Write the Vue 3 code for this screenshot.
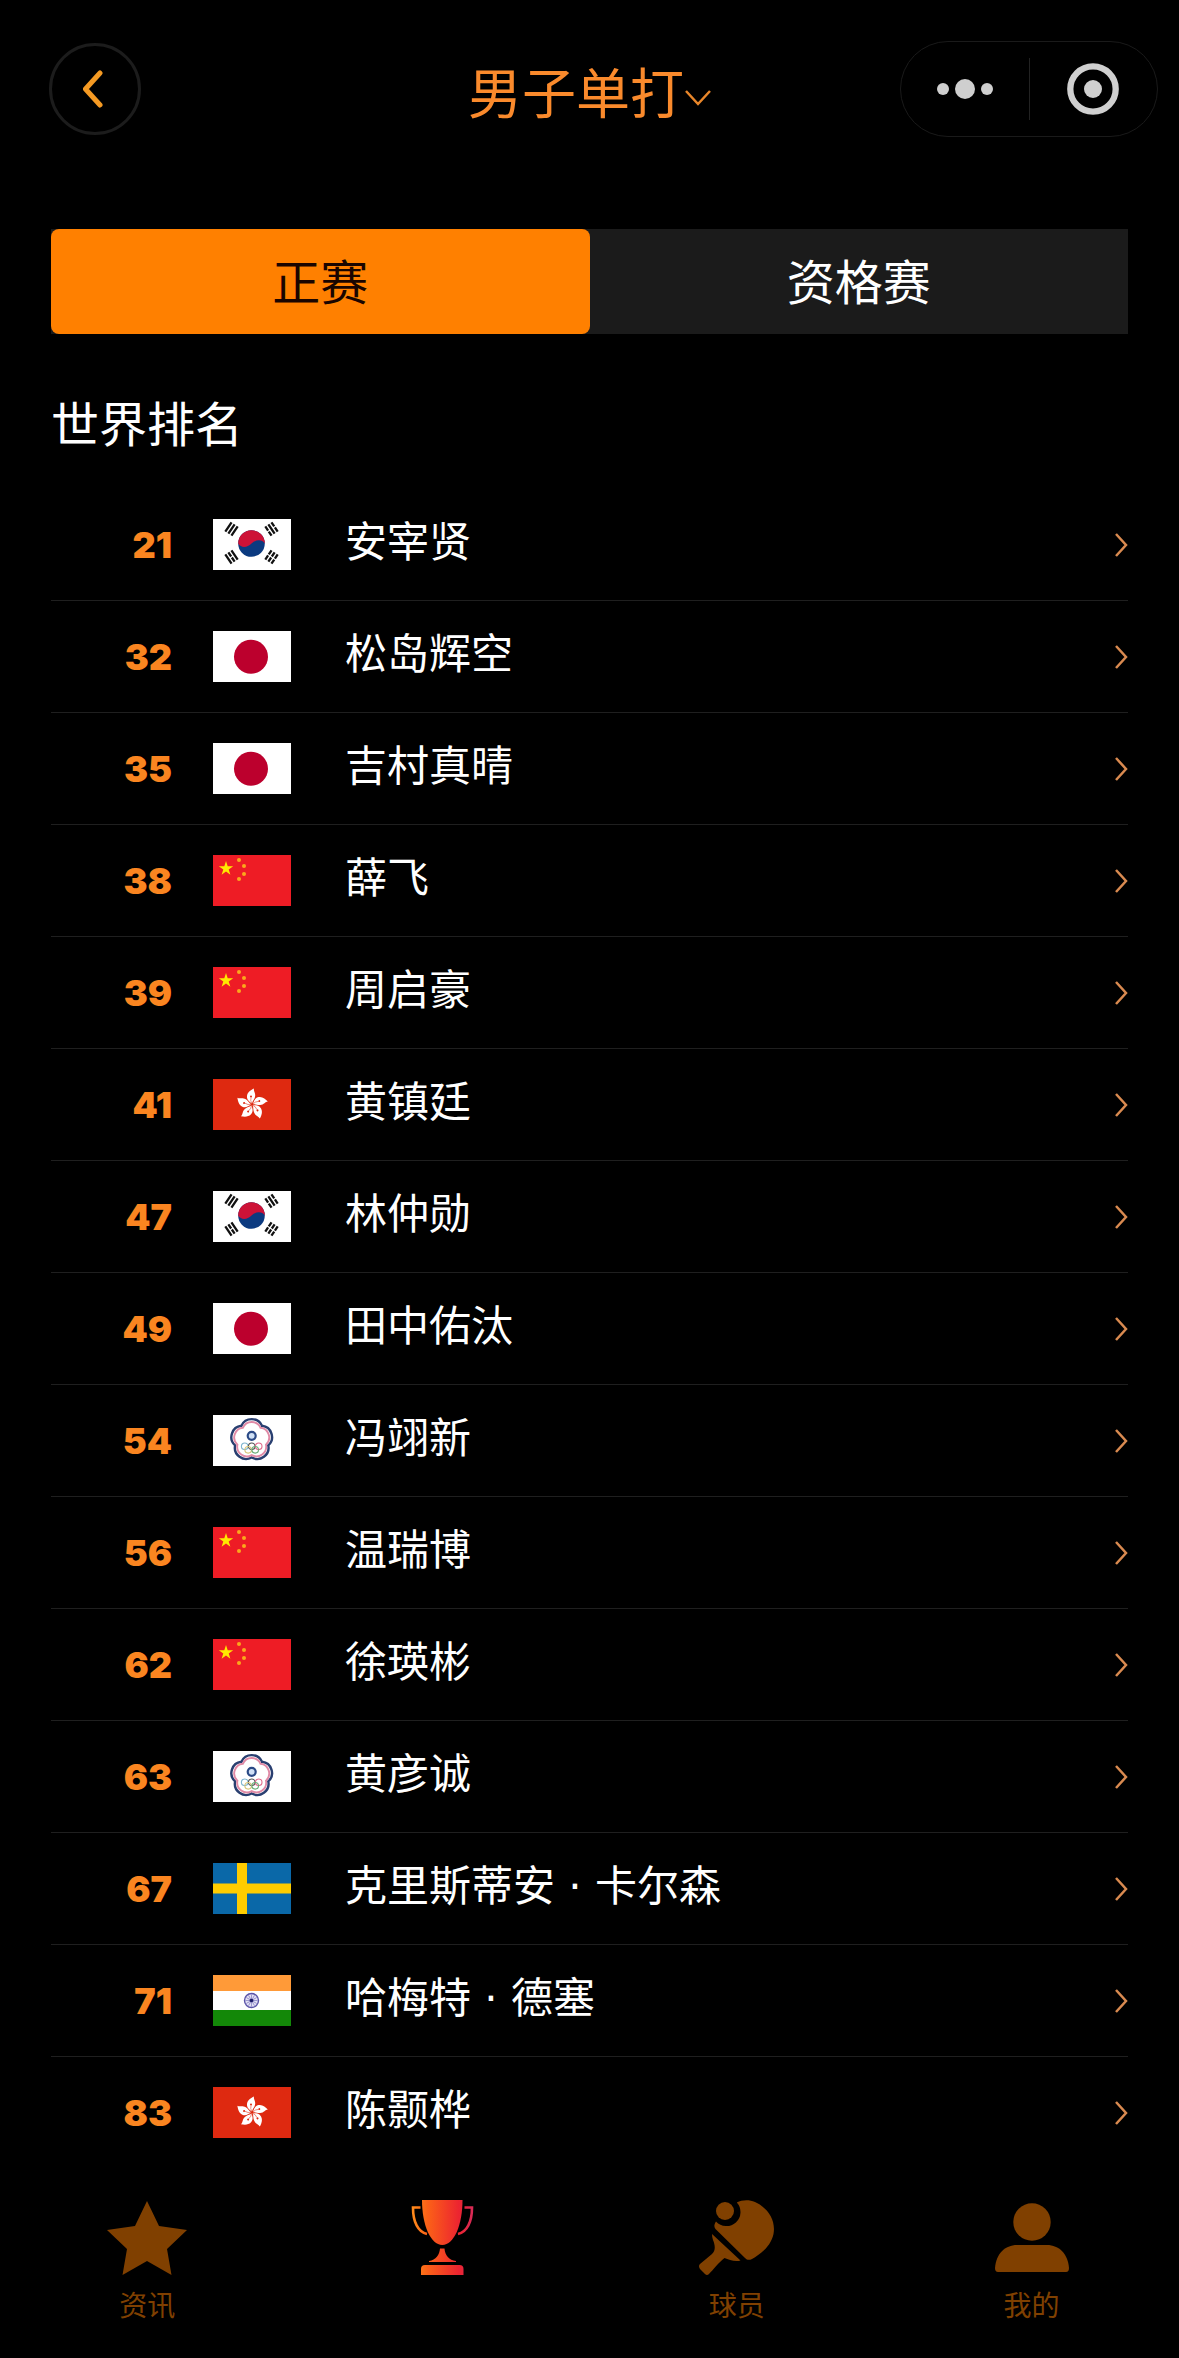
<script setup>
import { ref } from 'vue'

const events = ['男子单打']
const selectedEvent = ref(events[0])

const stages = ['正赛', '资格赛']
const activeStage = ref('正赛')

const players = [
  { rank: 21, flag: 'kr', name: '安宰贤' },
  { rank: 32, flag: 'jp', name: '松岛辉空' },
  { rank: 35, flag: 'jp', name: '吉村真晴' },
  { rank: 38, flag: 'cn', name: '薛飞' },
  { rank: 39, flag: 'cn', name: '周启豪' },
  { rank: 41, flag: 'hk', name: '黄镇廷' },
  { rank: 47, flag: 'kr', name: '林仲勋' },
  { rank: 49, flag: 'jp', name: '田中佑汰' },
  { rank: 54, flag: 'tpe', name: '冯翊新' },
  { rank: 56, flag: 'cn', name: '温瑞博' },
  { rank: 62, flag: 'cn', name: '徐瑛彬' },
  { rank: 63, flag: 'tpe', name: '黄彦诚' },
  { rank: 67, flag: 'se', name: '克里斯蒂安 · 卡尔森' },
  { rank: 71, flag: 'in', name: '哈梅特 · 德塞' },
  { rank: 83, flag: 'hk', name: '陈颢桦' },
]

const smallStars = [[26, 5], [31, 11], [31, 19], [26, 24]]
const petals = [0, 72, 144, 216, 288]
const spokes = [0, 30, 60, 90, 120, 150]
</script>

<template>
  <div class="page">
    <header class="topbar">
      <button class="back" aria-label="返回">
        <svg width="24" height="40" viewBox="0 0 24 40">
          <path d="M17 4L2.500 20L17 36" fill="none" stroke="#f59a23" stroke-width="5" stroke-linecap="round" stroke-linejoin="round" />
        </svg>
      </button>
      <label class="event">
        <select v-model="selectedEvent" aria-label="项目">
          <option v-for="event in events" :key="event">{{ event }}</option>
        </select>
        <svg width="28" height="18" viewBox="0 0 28 18">
          <path d="M2 2L14 15L26 2" fill="none" stroke="#e8862a" stroke-width="2.500" />
        </svg>
      </label>
      <div class="capsule">
        <button aria-label="更多">
          <svg width="58" height="20" viewBox="0 0 58 20" fill="#cfcfcf">
            <circle cx="7" cy="10" r="6" />
            <circle cx="29" cy="10" r="10" />
            <circle cx="51" cy="10" r="6" />
          </svg>
        </button>
        <span class="divider"></span>
        <button aria-label="关闭">
          <svg width="52" height="52" viewBox="0 0 52 52">
            <circle cx="26" cy="26" r="22.7" fill="none" stroke="#cfcfcf" stroke-width="6.3" />
            <circle cx="26" cy="26" r="9" fill="#cfcfcf" />
          </svg>
        </button>
      </div>
    </header>

    <main>
      <div class="tabs">
        <button
          v-for="stage in stages"
          :key="stage"
          :class="{ active: stage === activeStage }"
          @click="activeStage = stage"
        >{{ stage }}</button>
      </div>

      <h2>世界排名</h2>

      <ul class="ranking">
        <li v-for="player in players" :key="player.rank">
          <a href="#">
            <span class="rank">{{ player.rank }}</span>
            <svg class="flag" viewBox="0 0 78 51">
              <g v-if="player.flag === 'kr'">
                <rect width="78" height="51" fill="#fff" />
                <circle cx="38.5" cy="24.5" r="13.3" fill="#0b3a80" />
                <path d="M25.2 24.5A13.3 13.3 0 0 1 51.8 24.5C49 20 43 20.500 38.5 24.5C34 29 28 29 25.2 24.5Z" fill="#cd1237" />
                <g stroke="#111" stroke-width="2.3">
                  <path d="M-3.7 -5.6V5.6M0 -5.6V5.6M3.7 -5.6V5.6" transform="translate(18.5 10) rotate(34)" />
                  <path d="M-3.7 -5.6V-.6M-3.7 .6V5.6M0 -5.6V5.6M3.7 -5.6V-.6M3.7 .6V5.6" transform="translate(58.5 10) rotate(-34)" />
                  <path d="M-3.7 -5.6V5.6M0 -5.6V-.6M0 .6V5.6M3.7 -5.6V5.6" transform="translate(18.5 38) rotate(-34)" />
                  <path d="M-3.7 -5.6V-.6M-3.7 .6V5.6M0 -5.6V-.6M0 .6V5.6M3.7 -5.6V-.6M3.7 .6V5.6" transform="translate(58.5 38) rotate(34)" />
                </g>
              </g>
              <g v-else-if="player.flag === 'jp'">
                <rect width="78" height="51" fill="#fff" />
                <circle cx="38" cy="25.7" r="17" fill="#bc002d" />
              </g>
              <g v-else-if="player.flag === 'cn'">
                <rect width="78" height="51" fill="#ee1c25" />
                <path d="M13 6L14.7 11.2H20.2L15.7 14.4L17.4 19.7L13 16.5L8.6 19.7L10.3 14.4L5.8 11.2H11.3Z" fill="#ffea00" />
                <circle v-for="[x, y] in smallStars" :key="y" :cx="x" :cy="y" r="2" fill="#fba81c" />
              </g>
              <g v-else-if="player.flag === 'hk'">
                <rect width="78" height="51" fill="#de2910" />
                <g v-for="angle in petals" :key="angle" :transform="`translate(39 25.5) rotate(${angle})`">
                  <path d="M0 -1C-3 -3 -5.400 -5 -5 -8.500C-4.500 -12.500 -1 -14.500 2 -16C1.200 -13.500 4 -11.500 3 -7.500C2.400 -5 .8 -4 0 -1Z" fill="#fff" />
                  <circle cx="-1" cy="-8" r="1" fill="#de2910" />
                  <path d="M-1 -7Q-2 -3.5 0 -1" fill="none" stroke="#de2910" stroke-width=".5" />
                </g>
              </g>
              <g v-else-if="player.flag === 'tpe'">
                <rect width="78" height="51" fill="#fff" />
                <g transform="translate(38.7 25)" fill="none">
                  <path d="M10.3 -14.2A11.3 11.3 0 0 1 16.6 5.4A11.3 11.3 0 0 1 0 17.5A11.3 11.3 0 0 1 -16.6 5.4A11.3 11.3 0 0 1 -10.3 -14.2A11.3 11.3 0 0 1 10.3 -14.2Z" stroke="#293f70" stroke-width="2.4" />
                  <path d="M10.3 -14.2A11.3 11.3 0 0 1 16.6 5.4A11.3 11.3 0 0 1 0 17.5A11.3 11.3 0 0 1 -16.6 5.4A11.3 11.3 0 0 1 -10.3 -14.2A11.3 11.3 0 0 1 10.3 -14.2Z" stroke="#e08aa6" stroke-width="2.2" transform="scale(.86)" />
                  <circle cy="-4.2" r="4" stroke="#2b4a86" stroke-width="2.2" fill="#cfe0f5" />
                  <g stroke-width="1.1">
                    <circle cx="-7" cy="6.3" r="3.3" stroke="#7fb5cf" />
                    <circle cx="0" cy="6.3" r="3.3" stroke="#555" />
                    <circle cx="7" cy="6.3" r="3.3" stroke="#e0698a" />
                    <circle cx="-3.5" cy="9.8" r="3.3" stroke="#d9c67a" />
                    <circle cx="3.5" cy="9.8" r="3.3" stroke="#6cae78" />
                  </g>
                </g>
              </g>
              <g v-else-if="player.flag === 'se'">
                <rect width="78" height="51" fill="#0a68a8" />
                <path d="M24 0H34V51H24ZM0 20.5H78V30.5H0Z" fill="#fecc00" />
              </g>
              <g v-else>
                <rect width="78" height="51" fill="#fff" />
                <rect width="78" height="16" fill="#ff9a38" />
                <rect y="35" width="78" height="16" fill="#138808" />
                <g transform="translate(38.5 25.5)" stroke="#5b54a8">
                  <circle r="7" fill="#e3e1f5" stroke-width="1.4" />
                  <path v-for="angle in spokes" :key="angle" d="M-6 0H6" stroke-width=".5" :transform="`rotate(${angle})`" />
                  <circle r="1.8" fill="#1a1a66" stroke="none" />
                </g>
              </g>
            </svg>
            <span class="name">{{ player.name }}</span>
            <svg class="arrow" width="14" height="26" viewBox="0 0 14 26">
              <path d="M2 2L12 13L2 24" fill="none" stroke="#d98a50" stroke-width="2.5" />
            </svg>
          </a>
        </li>
      </ul>
    </main>

    <nav class="tabbar">
      <a href="#">
        <svg width="80" height="76" viewBox="0 0 80 76">
          <path d="M40 1L52 26L80 30L60 49L64.5 75L40 61L15.5 75L20 49L0 30L28 26Z" fill="#804000" />
        </svg>
        <span>资讯</span>
      </a>
      <a href="#" aria-label="赛事">
        <svg width="63" height="76" viewBox="0 0 63 76">
          <defs>
            <linearGradient id="cup" gradientUnits="userSpaceOnUse" x1="2" y1="0" x2="61" y2="0">
              <stop offset="0" stop-color="#ff8a1a" />
              <stop offset=".25" stop-color="#fb6018" />
              <stop offset=".78" stop-color="#ec2430" />
              <stop offset="1" stop-color="#d92a55" />
            </linearGradient>
          </defs>
          <g fill="url(#cup)">
            <path d="M11 0H51.5C51.5 25 43 45 31.3 45S11 25 11 0Z" />
            <path d="M29 48.5H33.5C34 55 38 60.5 45 61V62H18V61C25 60 28.5 55 29 48.5Z" />
            <path d="M10 75V69Q10 65 14 65H48.5Q52.5 65 52.5 69V75Z" />
          </g>
          <path d="M9.5 7.5H2C2 22 7 32 16 34M53.5 7.5H61C61 22 56 32 47 34" fill="none" stroke="url(#cup)" stroke-width="2.6" />
        </svg>
      </a>
      <a href="#">
        <svg width="76" height="76" viewBox="0 0 76 76" fill="#804000">
          <circle cx="26" cy="11" r="9" />
          <path d="M37.8 2.5C43 0 50 -.5 56 2C69 8 77 20 74.5 34C72 46 62 54 53 59C50 60.5 48 60 46 58L16.5 29C15 27 14.8 25 17 21.5A14 14 0 0 0 37.8 2.5Z" />
          <path d="M13 34L41.5 60.5C36 62 30 60 25.5 58C20 62 14 70 10 74Q8 76 6 74L1 69Q-1 66 1 64L13 54C17 50 16 45 14 40Q13 37 13 34Z" />
        </svg>
        <span>球员</span>
      </a>
      <a href="#">
        <svg width="74" height="76" viewBox="0 0 74 76" fill="#804000">
          <circle cx="37" cy="22" r="18.7" />
          <path d="M0 68C1 54 10 45 22 45H52C64 45 73 54 74 68Q74 72 71 72H3Q0 72 0 68Z" />
        </svg>
        <span>我的</span>
      </a>
    </nav>
  </div>
</template>

<style>
body {
  margin: 0;
  background: #000;
}
</style>

<style scoped>
.page {
  display: flex;
  flex-direction: column;
  box-sizing: border-box;
  min-height: 100vh;
  padding-top: 41px;
  background: #000;
  color: #fff;
  font-family: "Noto Sans CJK SC", sans-serif;
}
button,
select {
  margin: 0;
  padding: 0;
  border: 0;
  background: none;
  color: inherit;
  font: inherit;
  cursor: pointer;
}
a {
  color: inherit;
  text-decoration: none;
}
svg {
  display: block;
}
.topbar {
  display: grid;
  grid-template-columns: 1fr auto 1fr;
  align-items: center;
  padding: 0 21px 0 22px;
}
.back {
  display: flex;
  align-items: center;
  justify-content: center;
  box-sizing: border-box;
  width: 92px;
  height: 92px;
  margin-left: 27px;
  border: 3px solid #1c1c1c;
  border-radius: 50%;
}
.event {
  display: flex;
  align-items: center;
  padding-top: 4px;
  color: #fa8a2c;
}
.event select {
  appearance: none;
  font-size: 54px;
  line-height: 80px;
}
.event svg {
  margin-top: 14px;
}
.capsule {
  display: flex;
  align-items: center;
  justify-self: end;
  box-sizing: border-box;
  width: 258px;
  height: 96px;
  border: 1px solid #1a1a1a;
  border-radius: 48px;
}
.capsule button {
  display: flex;
  flex: 1;
  align-items: center;
  justify-content: center;
  height: 100%;
}
.divider {
  width: 1px;
  height: 62px;
  background: #222;
}
main {
  padding: 92px 51px 0;
}
.tabs {
  display: flex;
  background: #1b1b1b;
}
.tabs button {
  flex: 1;
  height: 105px;
  padding-bottom: 6px;
  font-size: 48px;
}
.tabs .active {
  border-radius: 8px;
  background: #ff8000;
  color: #1a0500;
}
h2 {
  margin: 51px 0 32px;
  font-size: 48px;
  font-weight: 400;
  line-height: 72px;
}
.ranking {
  margin: 0;
  padding: 0;
  list-style: none;
}
.ranking li {
  border-bottom: 1px solid #1f1f1f;
}
.ranking li:last-child {
  border-bottom-color: transparent;
}
.ranking a {
  display: flex;
  align-items: center;
  height: 111px;
}
.rank {
  width: 121px;
  color: #fa8520;
  font-family: Inter, sans-serif;
  font-size: 36px;
  font-weight: 900;
  text-align: right;
}
.flag {
  width: 78px;
  height: 51px;
  margin: 0 54px 0 41px;
}
.name {
  flex: 1;
  padding-bottom: 4px;
  font-family: "DejaVu Sans", "Noto Sans CJK SC", sans-serif;
  font-size: 42px;
  line-height: 60px;
}
.tabbar {
  position: sticky;
  bottom: 0;
  display: flex;
  box-sizing: border-box;
  height: 190px;
  margin-top: auto;
  padding-top: 31px;
  background: #000;
  color: #804000;
  font-size: 28px;
  line-height: 40px;
}
.tabbar a {
  display: flex;
  flex: 1;
  flex-direction: column;
  align-items: center;
  gap: 8px;
}
</style>
